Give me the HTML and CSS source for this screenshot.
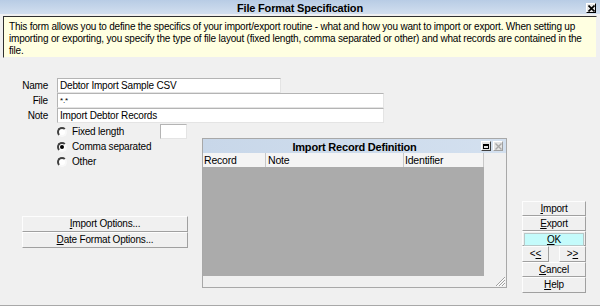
FILE: index.html
```html
<!DOCTYPE html>
<html lang="en">
<head>
  <meta charset="UTF-8">
  <title>File Format Specification</title>
  <link rel="stylesheet" href="styles.css">
</head>
<body>

<div class="dialog">
  <div class="titlebar">
    <span class="title">File Format Specification</span>
    <span class="close-btn">
      <svg width="7" height="7" viewBox="0 0 7 7"><path d="M0.5 0.5 L6.5 6.5 M6.5 0.5 L0.5 6.5" stroke="#000" stroke-width="1.6"/></svg>
    </span>
  </div>

  <div class="info">
    <div>This form allows you to define the specifics of your import/export routine - what and how you want to import or export. When setting up</div>
    <div>importing or exporting, you specify the type of file layout (fixed length, comma separated or other) and what records are contained in the</div>
    <div>file.</div>
  </div>

  <div class="main">
    <div class="fields">
      <label>Name</label><div class="input short">Debtor Import Sample CSV</div>
      <label>File</label><div class="input small-text">*.*</div>
      <label>Note</label><div class="input">Import Debtor Records</div>
    </div>

    <div class="lower">
      <div class="left-col">
        <div class="radios">
          <div class="radio-row"><span class="radio"></span>Fixed length<span class="input len"></span></div>
          <div class="radio-row"><span class="radio checked"></span>Comma separated</div>
          <div class="radio-row"><span class="radio"></span>Other</div>
        </div>
        <div class="option-btns">
          <div class="btn wide"><u>I</u>mport Options...</div>
          <div class="btn wide"><u>D</u>ate Format Options...</div>
        </div>
      </div>

      <div class="subwin">
        <div class="sub-title">
          <span class="title">Import Record Definition</span>
          <span class="sub-btns">
            <span class="tb max"></span>
            <span class="tb cls">
              <svg width="7" height="7" viewBox="0 0 7 7"><path d="M0.5 0.5 L6.5 6.5 M6.5 0.5 L0.5 6.5" stroke="#a8a8a8" stroke-width="1.4"/></svg>
            </span>
          </span>
        </div>
        <div class="sub-body">
          <div class="grid-head">
            <div class="col c1">Record</div>
            <div class="col c2">Note</div>
            <div class="col c3">Identifier</div>
          </div>
          <div class="grid-rows"></div>
        </div>
        <div class="sub-foot">
          <svg class="grip" width="11" height="11" viewBox="0 0 11 11">
            <path d="M10 1 L1 10 M10 4 L4 10 M10 7 L7 10" stroke="#a0a0a0" stroke-width="1"/>
            <path d="M10 2 L2 10 M10 5 L5 10 M10 8 L8 10" stroke="#fff" stroke-width="1"/>
          </svg>
        </div>
      </div>

      <div class="right-col">
        <div class="btn"><u>I</u>mport</div>
        <div class="btn"><u>E</u>xport</div>
        <div class="btn ok"><span><u>O</u>K</span></div>
        <div class="nav">
          <div class="btn">&lt;<u>&lt;</u></div>
          <div class="btn">&gt;<u>&gt;</u></div>
        </div>
        <div class="btn"><u>C</u>ancel</div>
        <div class="btn"><u>H</u>elp</div>
      </div>
    </div>
  </div>
</div>

</body>
</html>
```

FILE: styles.css
```css
body {
  margin: 0;
  background: #f0f0f0;
  font-family: 'Liberation Sans', Arial, sans-serif;
  font-size: 10px;
  letter-spacing: -0.2px;
  color: #000;
}
.dialog {
  width: 600px;
  height: 306px;
  box-sizing: border-box;
  border-bottom: 1px solid #a8a8a8;
  margin-bottom: 1px;
  position: relative;
}
.titlebar {
  height: 14px;
  background: linear-gradient(#b8cce5, #d2dfef);
  display: flex;
  align-items: center;
  justify-content: center;
  position: relative;
}
.title {
  font-weight: bold;
  font-size: 11px;
  letter-spacing: -0.2px;
  padding-top: 1px;
}
.close-btn {
  position: absolute;
  right: 4px;
  top: 3px;
  width: 10px;
  height: 10px;
  box-sizing: border-box;
  border: 1px solid #000;
  border-color: #fff #000 #000 #fff;
  background: #e8e8e8;
  display: flex;
  align-items: center;
  justify-content: center;
}
.info {
  margin: 2px 3px 0;
  height: 42px;
  box-sizing: border-box;
  padding: 4px 5px 0;
  background: #ffffe1;
  border: 1px solid;
  border-color: #303030 #f0f0f0 #f0f0f0 #303030;
  line-height: 12px;
  white-space: nowrap;
}
.main {
  padding-top: 20px;
}
.fields {
  display: grid;
  grid-template-columns: 48px auto;
  column-gap: 9px;
  justify-content: start;
}
.fields label {
  text-align: right;
  line-height: 15px;
}
.input {
  height: 15px;
  box-sizing: border-box;
  width: 327px;
  background: #fff;
  border: 1px solid;
  border-color: #b4b4b4 #e4e4e4 #e4e4e4 #b4b4b4;
  padding-left: 2px;
  line-height: 13px;
}
.input.short {
  width: 224px;
}
.input.small-text {
  font-size: 8px;
}
.lower {
  display: flex;
  align-items: flex-start;
}
.left-col {
  width: 202px;
}
.radios {
  padding: 1px 0 0 57px;
}
.radio-row {
  height: 15px;
  display: flex;
  align-items: center;
}
.radio {
  width: 10px;
  height: 10px;
  box-sizing: border-box;
  border-radius: 50%;
  border: 2px solid;
  border-color: #404040 #f8f8f8 #f8f8f8 #404040;
  background: #fff;
  margin-right: 5px;
  position: relative;
}
.radio.checked::after {
  content: '';
  position: absolute;
  left: 1px;
  top: 1px;
  width: 4px;
  height: 4px;
  border-radius: 50%;
  background: #000;
}
.input.len {
  width: 27px;
  margin-left: auto;
  margin-right: 15px;
  height: 15px;
}
.option-btns {
  margin: 47px 0 0 22px;
}
.btn {
  height: 15px;
  box-sizing: border-box;
  border: 1px solid;
  border-color: #fdfdfd #a0a0a0 #a0a0a0 #fdfdfd;
  background: #f0f0f0;
  text-align: center;
  line-height: 13px;
}
.btn.wide {
  width: 166px;
  height: 16px;
}
.subwin {
  margin-top: 15px;
  width: 305px;
  height: 150px;
  box-sizing: border-box;
  border: 1px solid #a8a8a8;
  display: flex;
  flex-direction: column;
}
.sub-title {
  height: 15px;
  background: linear-gradient(90deg, #c8d7e9, #d3e0ef);
  display: flex;
  align-items: center;
  justify-content: center;
  position: relative;
}
.sub-btns {
  position: absolute;
  right: 3px;
  top: 2px;
  display: flex;
  gap: 2px;
}
.tb {
  width: 10px;
  height: 10px;
  box-sizing: border-box;
  border: 1px solid;
  border-color: #fff #404040 #404040 #fff;
  background: #e4e4e4;
  display: flex;
  align-items: center;
  justify-content: center;
}
.tb.max::after {
  content: '';
  width: 6px;
  height: 5px;
  box-sizing: border-box;
  border: 1px solid #000;
  border-top-width: 2px;
}
.tb.cls {
  border-color: #fff #a0a0a0 #a0a0a0 #fff;
}
.sub-body {
  width: 281px;
  display: flex;
  flex-direction: column;
}
.grid-head {
  display: flex;
  height: 14px;
  background: #f4f4f4;
}
.col {
  box-sizing: border-box;
  border-right: 1px solid #c8c8c8;
  padding-left: 1px;
  line-height: 14px;
  font-size: 10.5px;
}
.c1 { width: 63px; }
.c2 { width: 138px; padding-left: 2px; }
.c3 { width: 80px; }
.grid-rows {
  height: 109px;
  background: #ababab;
}
.sub-foot {
  flex: 1;
  display: flex;
  justify-content: flex-end;
  align-items: flex-end;
}
.grip {
  display: block;
}
.right-col {
  width: 64px;
  margin: 78px 0 0 15px;
}
.btn.ok {
  padding: 1px;
}
.btn.ok span {
  display: block;
  height: 11px;
  background: #c4fbfb;
  border: 1px solid #b8c8c8;
  line-height: 11px;
}
.nav {
  display: flex;
  justify-content: space-between;
}
.nav .btn {
  width: 27px;
  height: 16px;
  line-height: 14px;
}
.right-col > .btn:last-child {
  height: 16px;
}
```
